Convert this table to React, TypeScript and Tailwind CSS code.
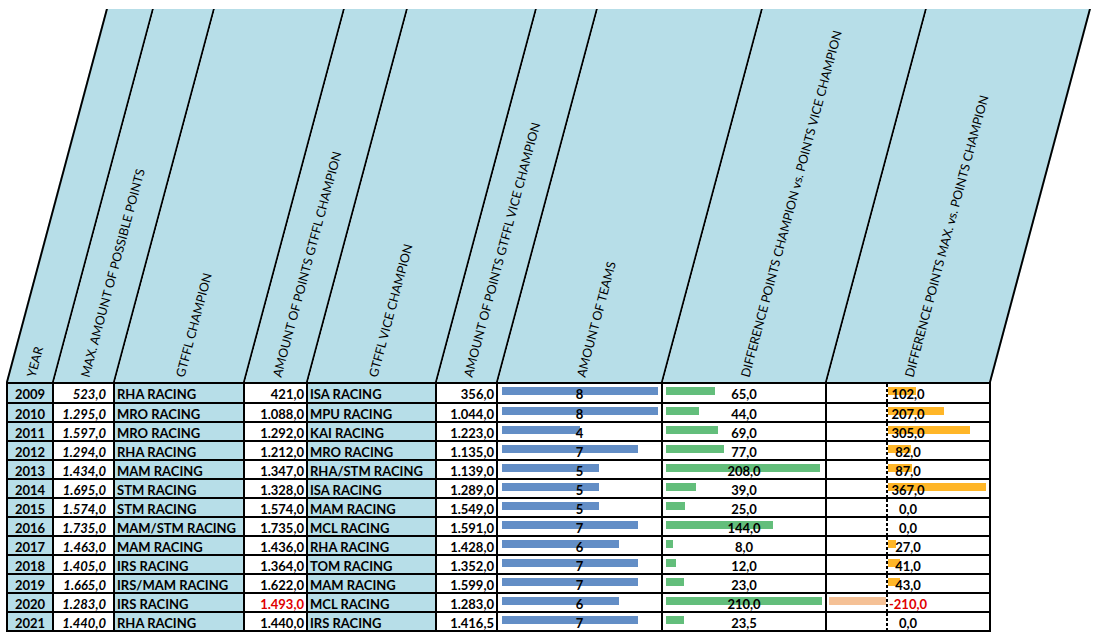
import React from "react";

type Row = {
  year: string;
  max: string;
  champ: string;
  champPts: string;
  champRed?: boolean;
  vice: string;
  vicePts: string;
  teams: number;
  diff: string;
  diffV: number;
  diffMax: string;
  diffMaxV: number;
};

const rows: Row[] = [
  { year: "2009", max: "523,0", champ: "RHA RACING", champPts: "421,0", vice: "ISA RACING", vicePts: "356,0", teams: 8, diff: "65,0", diffV: 65, diffMax: "102,0", diffMaxV: 102 },
  { year: "2010", max: "1.295,0", champ: "MRO RACING", champPts: "1.088,0", vice: "MPU RACING", vicePts: "1.044,0", teams: 8, diff: "44,0", diffV: 44, diffMax: "207,0", diffMaxV: 207 },
  { year: "2011", max: "1.597,0", champ: "MRO RACING", champPts: "1.292,0", vice: "KAI RACING", vicePts: "1.223,0", teams: 4, diff: "69,0", diffV: 69, diffMax: "305,0", diffMaxV: 305 },
  { year: "2012", max: "1.294,0", champ: "RHA RACING", champPts: "1.212,0", vice: "MRO RACING", vicePts: "1.135,0", teams: 7, diff: "77,0", diffV: 77, diffMax: "82,0", diffMaxV: 82 },
  { year: "2013", max: "1.434,0", champ: "MAM RACING", champPts: "1.347,0", vice: "RHA/STM RACING", vicePts: "1.139,0", teams: 5, diff: "208,0", diffV: 208, diffMax: "87,0", diffMaxV: 87 },
  { year: "2014", max: "1.695,0", champ: "STM RACING", champPts: "1.328,0", vice: "ISA RACING", vicePts: "1.289,0", teams: 5, diff: "39,0", diffV: 39, diffMax: "367,0", diffMaxV: 367 },
  { year: "2015", max: "1.574,0", champ: "STM RACING", champPts: "1.574,0", vice: "MAM RACING", vicePts: "1.549,0", teams: 5, diff: "25,0", diffV: 25, diffMax: "0,0", diffMaxV: 0 },
  { year: "2016", max: "1.735,0", champ: "MAM/STM RACING", champPts: "1.735,0", vice: "MCL RACING", vicePts: "1.591,0", teams: 7, diff: "144,0", diffV: 144, diffMax: "0,0", diffMaxV: 0 },
  { year: "2017", max: "1.463,0", champ: "MAM RACING", champPts: "1.436,0", vice: "RHA RACING", vicePts: "1.428,0", teams: 6, diff: "8,0", diffV: 8, diffMax: "27,0", diffMaxV: 27 },
  { year: "2018", max: "1.405,0", champ: "IRS RACING", champPts: "1.364,0", vice: "TOM RACING", vicePts: "1.352,0", teams: 7, diff: "12,0", diffV: 12, diffMax: "41,0", diffMaxV: 41 },
  { year: "2019", max: "1.665,0", champ: "IRS/MAM RACING", champPts: "1.622,0", vice: "MAM RACING", vicePts: "1.599,0", teams: 7, diff: "23,0", diffV: 23, diffMax: "43,0", diffMaxV: 43 },
  { year: "2020", max: "1.283,0", champ: "IRS RACING", champPts: "1.493,0", champRed: true, vice: "MCL RACING", vicePts: "1.283,0", teams: 6, diff: "210,0", diffV: 210, diffMax: "-210,0", diffMaxV: -210 },
  { year: "2021", max: "1.440,0", champ: "RHA RACING", champPts: "1.440,0", vice: "IRS RACING", vicePts: "1.416,5", teams: 7, diff: "23,5", diffV: 23.5, diffMax: "0,0", diffMaxV: 0 },
];

const headers = [
  "YEAR",
  "MAX. AMOUNT OF POSSIBLE POINTS",
  "GTFFL CHAMPION",
  "AMOUNT OF POINTS GTFFL CHAMPION",
  "GTFFL VICE CHAMPION",
  "AMOUNT OF POINTS GTFFL VICE CHAMPION",
  "AMOUNT OF TEAMS",
  "DIFFERENCE POINTS CHAMPION vs. POINTS VICE CHAMPION",
  "DIFFERENCE POINTS MAX. vs. POINTS CHAMPION",
];

const GRID = "grid grid-cols-[48px_61px_130px_63px_129px_61px_165px_164px_164px]";
const STACK = "col-start-1 row-start-1";

export default function App() {
  return (
    <div className="w-[1096px] h-[640px] bg-white overflow-hidden font-['Lato','Noto_Sans',sans-serif] text-black pt-[9px] pl-[6px]">
      <div className="w-fit flex flex-col">
        {/* Header with slanted cells */}
        <div className={GRID}>
          {headers.map((h, i) => (
            <div
              key={h}
              className={`h-[373px] -skew-x-15 origin-bottom bg-[#b7dee8] border-r-2 border-black flex items-end justify-center ${
                i === 0 ? "border-l-2" : ""
              }`}
            >
              <div className="w-0 h-[16px] leading-[16px] -mb-[3px] whitespace-nowrap origin-left [transform:skewX(15deg)_rotate(-75deg)] text-[12.4px]">
                {h}
              </div>
            </div>
          ))}
        </div>

        {/* Body */}
        <div className={`${GRID} border-t-2 border-black text-[13px] font-bold leading-[20px]`}>
          {rows.map((r, idx) => {
            const h = idx === 0 ? "h-[20px]" : "h-[19px]";
            const cell = `${h} border-r-2 border-b-2 border-black whitespace-nowrap overflow-hidden`;
            const blueW = r.teams * 19.45;
            const greenW = 1 + r.diffV * 0.737;
            const orangeW = r.diffMaxV === 0 ? 0 : 1 + Math.abs(r.diffMaxV) * 0.265;
            return (
              <React.Fragment key={r.year}>
                <div className={`${cell} border-l-2 bg-[#b7dee8] text-center`}>{r.year}</div>
                <div className={`${cell} bg-white text-right italic pr-[7px]`}>{r.max}</div>
                <div className={`${cell} bg-[#b7dee8] pl-[2px]`}>{r.champ}</div>
                <div className={`${cell} bg-white text-right pr-[2px] ${r.champRed ? "text-[#e00000]" : ""}`}>{r.champPts}</div>
                <div className={`${cell} bg-[#b7dee8] pl-[2px]`}>{r.vice}</div>
                <div className={`${cell} bg-white text-right pr-[2px]`}>{r.vicePts}</div>

                {/* Amount of teams: blue data bar */}
                <div className={`${cell} bg-white grid`}>
                  <div className={`${STACK} self-start mt-[3px] ml-[4px] h-[8px] bg-[#638ec6]`} style={{ width: blueW }} />
                  <span className={`${STACK} justify-self-center`}>{r.teams}</span>
                </div>

                {/* Difference champion vs vice: green data bar */}
                <div className={`${cell} bg-white grid`}>
                  <div className={`${STACK} self-start mt-[3px] ml-[3px] h-[8px] bg-[#63be7b]`} style={{ width: greenW }} />
                  <span className={`${STACK} justify-self-center`}>{r.diff}</span>
                </div>

                {/* Difference max vs champion: axis with orange / negative bars */}
                <div className={`${cell} bg-white grid`}>
                  <div className={`${STACK} flex h-full`}>
                    <div className="w-[59px] flex justify-end items-start pt-[3px]">
                      {r.diffMaxV < 0 && <div className="h-[8px] bg-[#f5c196]" style={{ width: orangeW }} />}
                    </div>
                    <div className="w-[2px] h-full bg-[repeating-linear-gradient(to_bottom,#000_0px,#000_3px,transparent_3px,transparent_5px)]" />
                    <div className="flex items-start pt-[3px]">
                      {r.diffMaxV > 0 && <div className="h-[8px] bg-[#ffb628]" style={{ width: orangeW }} />}
                    </div>
                  </div>
                  <span className={`${STACK} justify-self-center ${r.diffMaxV < 0 ? "text-[#e00000]" : ""}`}>{r.diffMax}</span>
                </div>
              </React.Fragment>
            );
          })}
        </div>
      </div>
    </div>
  );
}
